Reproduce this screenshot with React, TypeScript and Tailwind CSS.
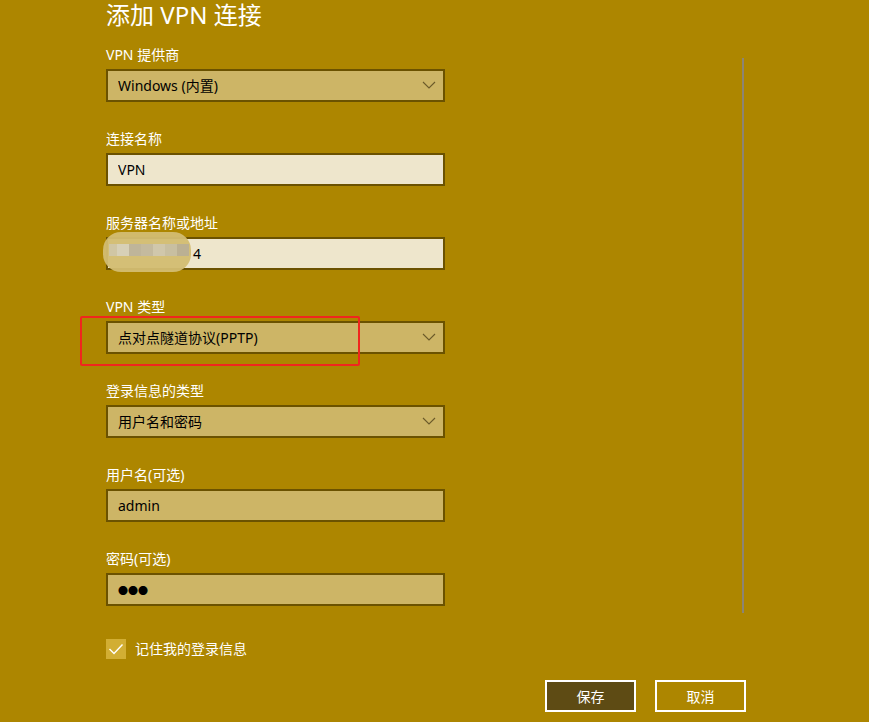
import React from 'react'

const font = { fontFamily: '"Noto Sans", "Noto Sans CJK SC", sans-serif' }

function Chevron() {
  return (
    <svg width="14" height="8" viewBox="0 0 14 8" className="shrink-0">
      <path d="M1 1l6 6 6-6" fill="none" stroke="#6b5a2a" strokeWidth="1.1" />
    </svg>
  )
}

function Field({
  label,
  value,
  select,
  light,
}: {
  label: string
  value: React.ReactNode
  select?: boolean
  light?: boolean
}) {
  return (
    <div className="flex flex-col">
      <div className="h-5 text-[14px] leading-5 text-white">{label}</div>
      <div
        className={
          'mt-1 flex h-[33px] w-[339px] items-center border-2 border-[#6b5200] pl-[10px] pr-[7px] pb-[1px] text-[14px] text-black ' +
          (light ? 'bg-[#eee6cc]' : 'bg-[#cdb566]')
        }
      >
        <div className="flex-1 truncate">{value}</div>
        {select && <Chevron />}
      </div>
    </div>
  )
}

export default function App() {
  return (
    <div className="relative h-[722px] w-full overflow-hidden bg-[#ad8600]" style={font}>
      <div className="flex flex-col pl-[106px]">
        <h1 className="mt-[1px] h-[44px] text-[24px] leading-[28px] text-white">添加 VPN 连接</h1>

        <div className="flex flex-col gap-[27px]">
          <Field label="VPN 提供商" value="Windows (内置)" select />
          <Field label="连接名称" value="VPN" light />
          <Field label="服务器名称或地址" value={<span className="pl-[75px]">4</span>} light />
          <Field label="VPN 类型" value="点对点隧道协议(PPTP)" select />
          <Field label="登录信息的类型" value="用户名和密码" select />
          <Field label="用户名(可选)" value="admin" />
          <Field label="密码(可选)" value={<span className="text-[10px] tracking-[0px]">●●●</span>} />
        </div>

        <div className="mt-[33px] flex items-center gap-[9px]">
          <div className="flex h-5 w-5 items-center justify-center bg-[#d2ae33]">
            <svg width="16" height="12" viewBox="0 0 16 12">
              <path d="M1.5 6l4.5 4.5L14.5 1.5" fill="none" stroke="white" strokeWidth="1.4" />
            </svg>
          </div>
          <span className="text-[14px] leading-5 text-white">记住我的登录信息</span>
        </div>

        <div className="mt-[21px] flex gap-[19px] pl-[439px]">
          <button className="h-8 w-[91px] border-2 border-white bg-[#5e4b14] text-[14px] text-white">保存</button>
          <button className="h-8 w-[91px] border-2 border-white bg-[#ad8600] text-[14px] text-white">取消</button>
        </div>
      </div>

      {/* scrollbar */}
      <div className="absolute left-[742px] top-[58px] h-[555px] w-[2px] bg-[#8c8474]" />

      {/* red annotation box */}
      <div className="absolute left-[80px] top-[316px] h-[50px] w-[280px] rounded-[2px] border-2 border-[#f0261e]" />

      {/* blurred server address */}
      <div className="absolute left-[103px] top-[232px] h-[40px] w-[88px] overflow-hidden rounded-[18px] bg-[#d3bd72] opacity-95">
        <div className="mt-[12px] ml-[6px] flex h-[12px]">
          <div className="w-[8px] bg-[#cfc5a2]" />
          <div className="w-[12px] bg-[#d6cfb6]" />
          <div className="w-[12px] bg-[#bdb398]" />
          <div className="w-[12px] bg-[#c2b89c]" />
          <div className="w-[12px] bg-[#cfc6aa]" />
          <div className="w-[12px] bg-[#c7bd9f]" />
          <div className="w-[12px] bg-[#b9ae90]" />
        </div>
      </div>
    </div>
  )
}
